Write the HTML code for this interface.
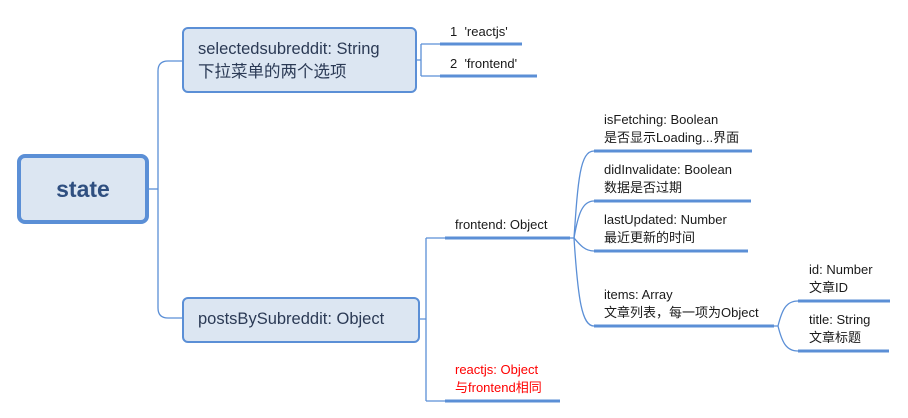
<!DOCTYPE html>
<html><head><meta charset="utf-8"><style>
body{margin:0;width:908px;height:418px;background:#fff;position:relative;overflow:hidden;font-family:"Liberation Sans","Noto Sans CJK SC",sans-serif;}
.t{position:absolute;font-size:13px;line-height:18px;color:#1a1a1a;white-space:nowrap}
.box{position:absolute;background:#dce6f2;border:2px solid #5b8fd6;border-radius:6px;box-sizing:border-box;color:#2b3a55;font-size:16.5px;line-height:23px;white-space:nowrap}
</style></head><body>
<svg width="908" height="418" style="position:absolute;left:0;top:0" fill="none" stroke="#5b8fd6">
<g stroke-width="1.3">
<path d="M148 189 H158"/>
<path d="M182 61 H168 Q158 61 158 71 V308 Q158 318 168 318 H182"/>
<path d="M417 60 H421 M421 44 V76 M421 44 H440 M421 76 H440"/>
<path d="M420 319 H426 M426 238 V401 M426 238 H445 M426 401 H445"/>
<path d="M570 238 H574"/>
<path d="M574 238 C578 180 580 151 594 151"/>
<path d="M574 238 C578 215 582 201 594 201"/>
<path d="M574 238 C580 245 585 251 594 251"/>
<path d="M574 238 C578 300 582 326 594 326"/>
<path d="M774 326 H778 C782 310 786 301 798 301 M778 326 C782 342 786 351 798 351"/>
</g>
<g stroke-width="3">
<path d="M440 44 H522 M440 76 H537"/>
<path d="M445 238 H570 M445 401 H560"/>
<path d="M594 151 H752 M594 201 H751 M594 251 H748 M594 326 H774"/>
<path d="M798 301 H890 M798 351 H889"/>
</g>
</svg>
<div class="box" style="left:17px;top:154px;width:132px;height:70px;border-width:4px;border-radius:8px;text-align:center;line-height:62px;font-size:23px;font-weight:bold;color:#2f4f80">state</div>
<div class="box" style="left:182px;top:27px;width:235px;height:66px;padding:9px 0 0 14px">selectedsubreddit: String<br>下拉菜单的两个选项</div>
<div class="box" style="left:182px;top:297px;width:238px;height:46px;padding:9px 0 0 14px">postsBySubreddit: Object</div>
<div class="t" style="left:450px;top:23px">1 &nbsp;'reactjs'</div>
<div class="t" style="left:450px;top:55px">2 &nbsp;'frontend'</div>
<div class="t" style="left:455px;top:216px">frontend: Object</div>
<div class="t" style="left:455px;top:361px;color:#f00">reactjs: Object<br>与frontend相同</div>
<div class="t" style="left:604px;top:111px">isFetching: Boolean<br>是否显示Loading...界面</div>
<div class="t" style="left:604px;top:161px">didInvalidate: Boolean<br>数据是否过期</div>
<div class="t" style="left:604px;top:211px">lastUpdated: Number<br>最近更新的时间</div>
<div class="t" style="left:604px;top:286px">items: Array<br>文章列表，每一项为Object</div>
<div class="t" style="left:809px;top:261px">id: Number<br>文章ID</div>
<div class="t" style="left:809px;top:311px">title: String<br>文章标题</div>
</body></html>
